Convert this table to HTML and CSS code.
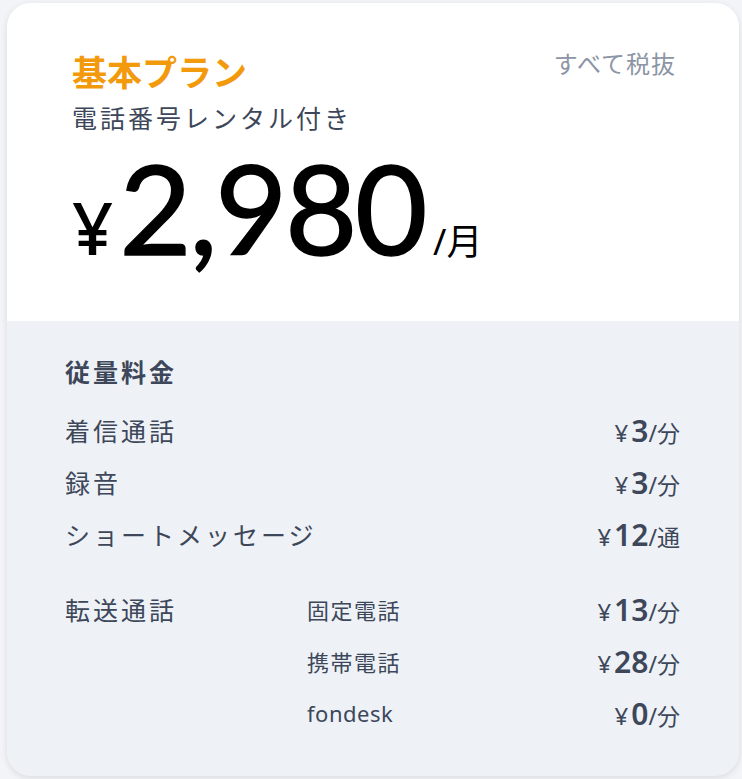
FILE: index.html
```html
<!DOCTYPE html>
<html lang="ja">
<head>
<meta charset="utf-8">
<link rel="stylesheet" href="styles.css">
</head>
<body>
<div class="card">
  <section class="top">
    <div class="head">
      <div class="titles">
        <h2 class="plan">基本プラン</h2>
        <p class="sub">電話番号レンタル付き</p>
      </div>
      <span class="tax">すべて税抜</span>
    </div>
    <div class="price">
      <span class="yen">¥</span><span class="amount">2,980</span><span class="per">/月</span>
    </div>
  </section>
  <section class="bottom">
    <h3 class="usage">従量料金</h3>
    <div class="rows">
      <div class="row"><span class="label">着信通話</span><span class="subl"></span><span class="cost"><span class="cy">¥</span><b>3</b><span class="cu">/分</span></span></div>
      <div class="row"><span class="label">録音</span><span class="subl"></span><span class="cost"><span class="cy">¥</span><b>3</b><span class="cu">/分</span></span></div>
      <div class="row"><span class="label">ショートメッセージ</span><span class="subl"></span><span class="cost"><span class="cy">¥</span><b>12</b><span class="cu">/通</span></span></div>
      <div class="row gap"><span class="label">転送通話</span><span class="subl">固定電話</span><span class="cost"><span class="cy">¥</span><b>13</b><span class="cu">/分</span></span></div>
      <div class="row"><span class="label"></span><span class="subl">携帯電話</span><span class="cost"><span class="cy">¥</span><b>28</b><span class="cu">/分</span></span></div>
      <div class="row"><span class="label"></span><span class="subl latin">fondesk</span><span class="cost"><span class="cy">¥</span><b>0</b><span class="cu">/分</span></span></div>
    </div>
  </section>
</div>
</body>
</html>
```
FILE: styles.css
```css
* { box-sizing: border-box; }
html, body { margin: 0; padding: 0; }
body {
  background: #f3f4f7;
  font-family: "Noto Sans", "Noto Sans CJK JP", sans-serif;
  color: #3d4759;
  width: 742px;
  height: 779px;
  overflow: hidden;
}
.card {
  margin: 3px 3px 0 7px;
  width: 732px;
  height: 773px;
  border-radius: 24px;
  overflow: hidden;
  background: #eef2f7;
  box-shadow: 0 2px 6px rgba(40, 50, 70, 0.12);
  display: flex;
  flex-direction: column;
}
.top {
  background: #fff;
  height: 318px;
  padding: 46px 63px 0 65px;
}
.head {
  display: flex;
  justify-content: space-between;
  align-items: flex-start;
}
.plan {
  margin: 0;
  font-size: 35px;
  line-height: 44px;
  font-weight: 700;
  color: #f39a0c;
  font-family: "Noto Sans CJK JP", sans-serif;
}
.sub {
  margin: 10px 0 0;
  font-size: 25px;
  line-height: 28px;
  letter-spacing: 3px;
  color: #3d4759;
  font-family: "Noto Sans CJK JP", sans-serif;
}
.tax {
  margin-top: -2px;
  font-size: 24px;
  line-height: 32px;
  color: #8c95a5;
  font-family: "Noto Sans CJK JP", sans-serif;
  letter-spacing: 1px;
}
.price {
  display: flex;
  align-items: baseline;
  margin-top: 16px;
  color: #000;
  height: 120px;
}
.yen {
  font-size: 72px;
  line-height: 120px;
  font-weight: 500;
  margin-right: 6px;
}
.amount {
  font-family: "Lato", sans-serif;
  font-size: 125px;
  line-height: 120px;
  font-weight: 400;
  -webkit-text-stroke: 1.5px #000;
  letter-spacing: -2.5px;
}
.per {
  font-size: 36px;
  line-height: 120px;
  margin-left: 8px;
  font-family: "Noto Sans", "Noto Sans CJK JP", sans-serif;
}
.bottom {
  flex: 1;
  padding: 33px 59px 0 58px;
}
.usage {
  margin: 0;
  font-size: 25px;
  line-height: 34px;
  font-weight: 700;
  letter-spacing: 3px;
  font-family: "Noto Sans CJK JP", sans-serif;
}
.rows {
  margin-top: 16px;
}
.row {
  display: grid;
  grid-template-columns: 242px 1fr auto;
  align-items: center;
  height: 52px;
}
.row.gap { margin-top: 23px; }
.label {
  font-size: 25px;
  font-family: "Noto Sans CJK JP", sans-serif;
  letter-spacing: 3px;
  white-space: nowrap;
}
.subl {
  font-size: 22px;
  font-family: "Noto Sans", "Noto Sans CJK JP", sans-serif;
  letter-spacing: 1.5px;
  white-space: nowrap;
}
.subl.latin { letter-spacing: 0.5px; }
.cost {
  display: flex;
  align-items: baseline;
  white-space: nowrap;
}
.cy { font-size: 24px; margin-right: 3px; }
.cost b { font-size: 30px; font-weight: 600; }
.cu { font-size: 23px; font-family: "Noto Sans", "Noto Sans CJK JP", sans-serif; }
```
